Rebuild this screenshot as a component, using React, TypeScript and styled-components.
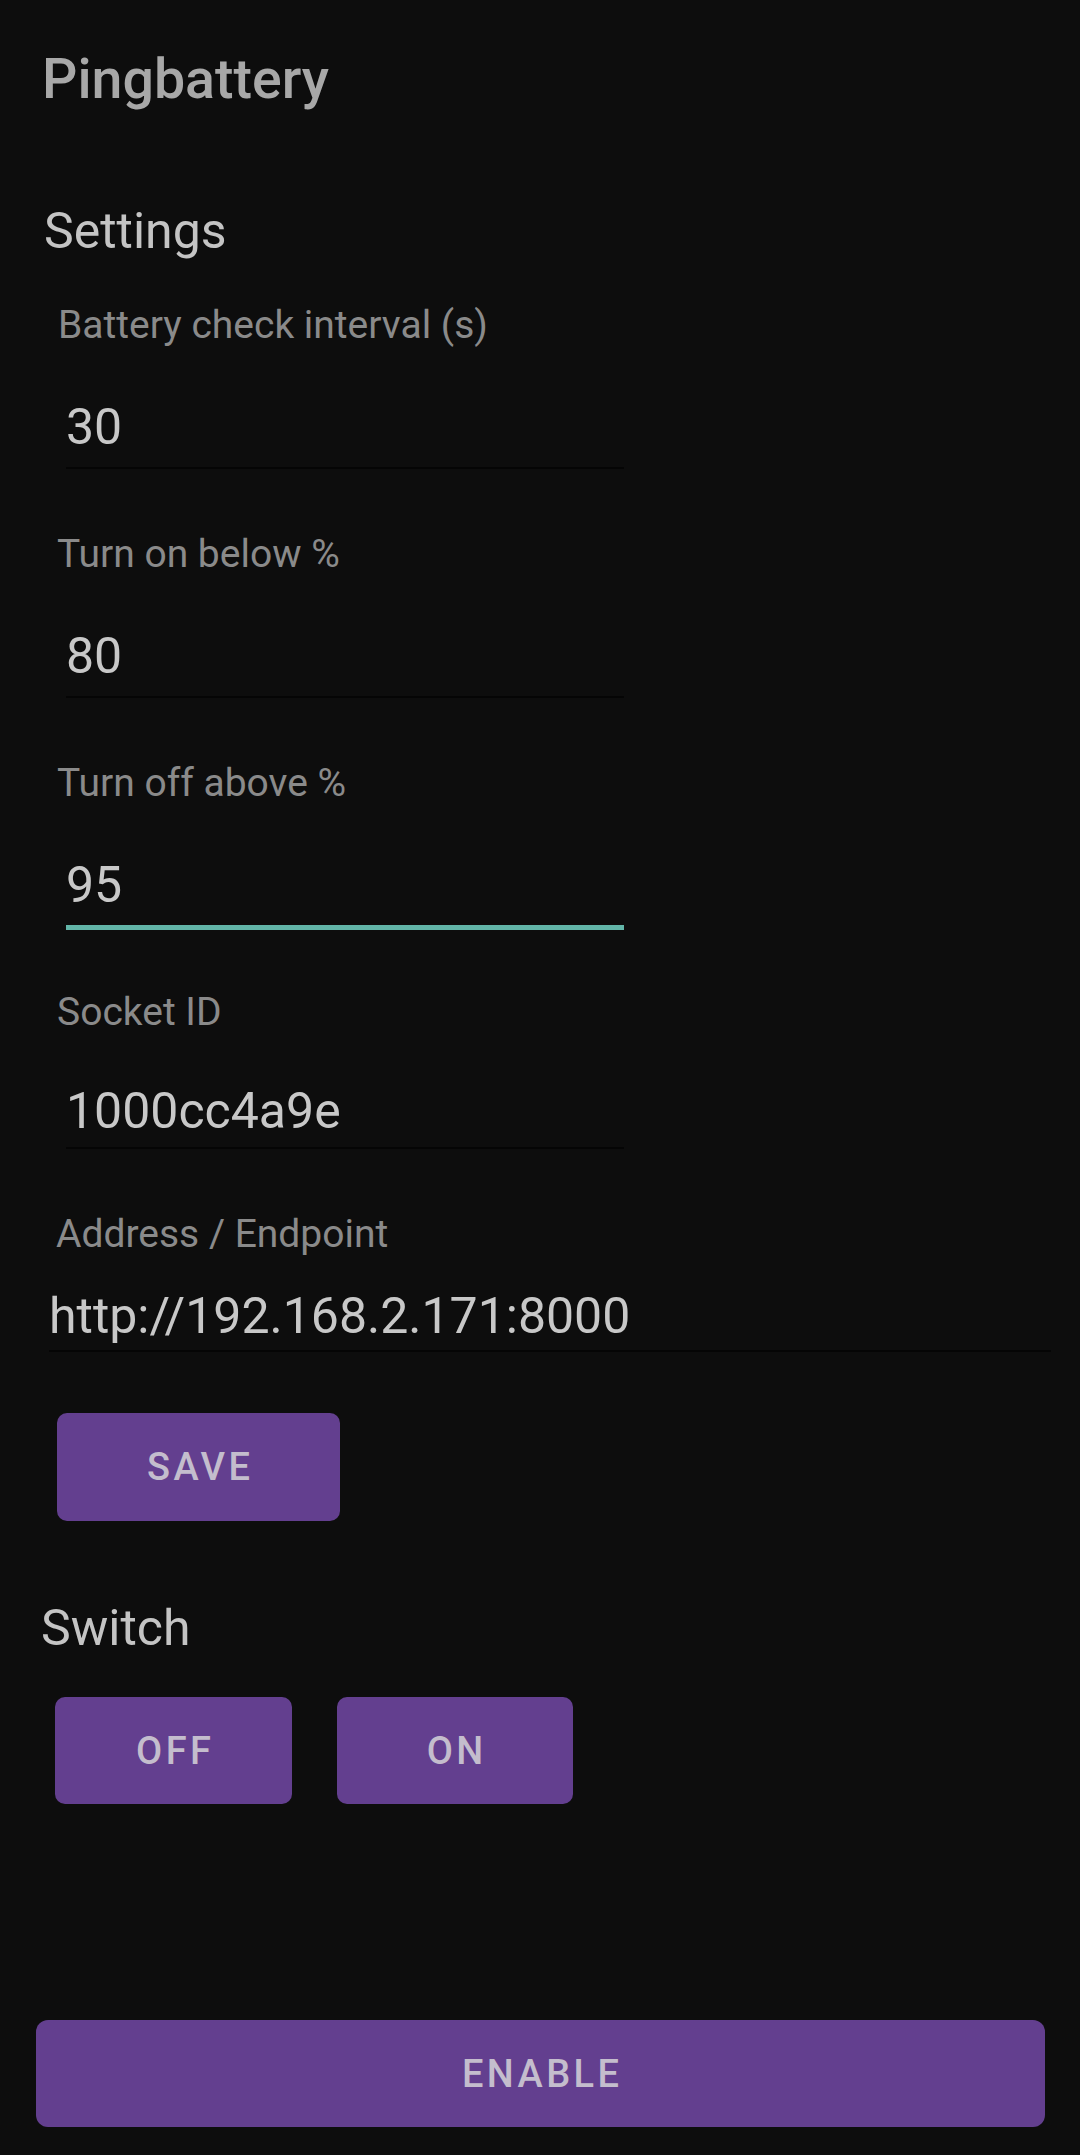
import React from 'react'
import styled, { createGlobalStyle } from 'styled-components'

const GlobalStyle = createGlobalStyle`
	* {
		box-sizing: border-box;
	}
	html, body {
		margin: 0;
		padding: 0;
		background: #0d0d0d;
	}
	body {
		font-family: Roboto, 'Noto Sans', sans-serif;
	}
`

const Page = styled.div`
	display: flex;
	flex-direction: column;
	align-items: flex-start;
	min-height: 100vh;
	padding-top: 45px;
	background: #0d0d0d;
`

const AppTitle = styled.h1`
	margin: 0 0 0 42px;
	font-size: 55.5px;
	line-height: 69px;
	font-weight: 500;
	color: #a8a8a8;
`

const SectionTitle = styled.h2<{ top: number; left: number }>`
	margin: ${(p) => p.top}px 0 0 ${(p) => p.left}px;
	font-size: 50px;
	line-height: 60px;
	font-weight: 400;
	color: #c4c4c4;
`

const FieldList = styled.div`
	display: flex;
	flex-direction: column;
	gap: 62px;
	margin-top: 41px;
	width: 100%;
`

const Field = styled.label`
	display: flex;
	flex-direction: column;
	align-items: flex-start;
`

const FieldLabel = styled.span<{ left: number }>`
	margin-left: ${(p) => p.left}px;
	font-size: 39px;
	line-height: 46px;
	color: #8a8a8a;
`

const FieldInput = styled.input<{
	gap: number
	pad: number
	left: number
	wide: number
	focused?: boolean
}>`
	display: block;
	margin: ${(p) => p.gap}px 0 0 ${(p) => p.left}px;
	width: ${(p) => p.wide}px;
	height: ${(p) => 58 + p.pad + 2}px;
	padding: 0 0 ${(p) => p.pad}px 0;
	border: none;
	border-bottom: 2px solid ${(p) => (p.focused ? '#62b5a8' : '#050505')};
	box-shadow: ${(p) => (p.focused ? '0 3px 0 #62b5a8' : 'none')};
	background: transparent;
	outline: none;
	font-family: Roboto, 'Noto Sans', sans-serif;
	font-size: 50px;
	line-height: 58px;
	color: #c8c8c8;
	caret-color: #62b5a8;
`

const PurpleButton = styled.button<{ wide: number; left?: number; radius?: number }>`
	display: flex;
	align-items: center;
	justify-content: center;
	width: ${(p) => p.wide}px;
	height: 107px;
	margin-left: ${(p) => p.left ?? 0}px;
	padding: 0 0 0 0.09em;
	border: none;
	border-radius: ${(p) => p.radius ?? 10}px;
	background: #633f8f;
	color: #c4bdcd;
	font-family: Roboto, 'Noto Sans', sans-serif;
	font-size: 38px;
	font-weight: 500;
	letter-spacing: 0.09em;
	text-transform: uppercase;
	cursor: pointer;
`

const SaveButton = styled(PurpleButton)`
	margin-top: 61px;
	height: 108px;
`

const ButtonRow = styled.div`
	display: flex;
	gap: 45px;
	margin: 39px 0 0 55px;
`

const EnableButton = styled(PurpleButton)`
	margin-top: auto;
	margin-bottom: 28px;
`

const fields = [
	{ label: 'Battery check interval (s)', value: '30', labelLeft: 58, gap: 50, pad: 11, left: 66, wide: 558 },
	{ label: 'Turn on below %', value: '80', labelLeft: 57, gap: 50, pad: 11, left: 66, wide: 558 },
	{ label: 'Turn off above %', value: '95', labelLeft: 57, gap: 50, pad: 11, left: 66, wide: 558, focused: true },
	{ label: 'Socket ID', value: '1000cc4a9e', labelLeft: 57, gap: 47, pad: 7, left: 66, wide: 558 },
	{ label: 'Address / Endpoint', value: 'http://192.168.2.171:8000', labelLeft: 56, gap: 30, pad: 5, left: 49, wide: 1002 },
]

export default function App() {
	return (
		<>
			<GlobalStyle />
			<Page>
				<AppTitle>Pingbattery</AppTitle>
				<SectionTitle top={87} left={44}>
					Settings
				</SectionTitle>
				<FieldList>
					{fields.map((f) => (
						<Field key={f.label}>
							<FieldLabel left={f.labelLeft}>{f.label}</FieldLabel>
							<FieldInput
								defaultValue={f.value}
								gap={f.gap}
								pad={f.pad}
								left={f.left}
								wide={f.wide}
								focused={f.focused}
							/>
						</Field>
					))}
				</FieldList>
				<SaveButton wide={283} left={57}>
					Save
				</SaveButton>
				<SectionTitle top={77} left={41}>
					Switch
				</SectionTitle>
				<ButtonRow>
					<PurpleButton wide={237}>Off</PurpleButton>
					<PurpleButton wide={236}>On</PurpleButton>
				</ButtonRow>
				<EnableButton wide={1009} left={36} radius={12}>
					Enable
				</EnableButton>
			</Page>
		</>
	)
}
